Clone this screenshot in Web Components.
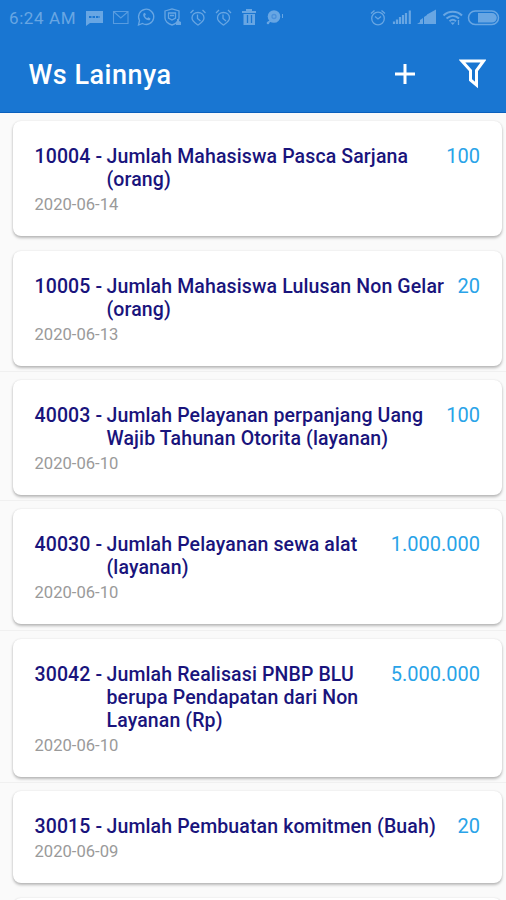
<!DOCTYPE html>
<html lang="id">
<head>
<meta charset="utf-8">
<title>Ws Lainnya</title>
<style>
html,body{margin:0;height:100%;overflow:hidden;background:#fafafa;font-family:Roboto,"Liberation Sans",sans-serif}
</style>
</head>
<body>
<ws-screen>
  <status-bar slot="head" time="6:24 AM"></status-bar>
  <app-bar slot="head">Ws Lainnya</app-bar>
  <ws-card plain code="10004" date="2020-06-14" value="100">Jumlah Mahasiswa Pasca Sarjana<br>(orang)</ws-card>
  <ws-card code="10005" date="2020-06-13" value="20">Jumlah Mahasiswa Lulusan Non Gelar<br>(orang)</ws-card>
  <ws-card code="40003" date="2020-06-10" value="100">Jumlah Pelayanan perpanjang Uang<br>Wajib Tahunan Otorita (layanan)</ws-card>
  <ws-card code="40030" date="2020-06-10" value="1.000.000">Jumlah Pelayanan sewa alat<br>(layanan)</ws-card>
  <ws-card code="30042" date="2020-06-10" value="5.000.000">Jumlah Realisasi PNBP BLU<br>berupa Pendapatan dari Non<br>Layanan (Rp)</ws-card>
  <ws-card plain code="30015" date="2020-06-09" value="20">Jumlah Pembuatan komitmen (Buah)</ws-card>
  <ws-card></ws-card>
</ws-screen>
<script>
const define = (name, html, setup) => customElements.define(name, class extends HTMLElement {
  constructor() {
    super();
    this.attachShadow({mode: 'open'}).innerHTML = html;
  }
  connectedCallback() { if (setup) setup(this, this.shadowRoot); }
});

define('ws-screen', `<style>
:host{display:flex;flex-direction:column;height:900px;overflow:hidden}
header{flex:none;background:#1976d2;height:112px;border-bottom:1px solid #0a60bd}
main{flex:1;overflow:hidden;padding-top:.3px}
</style><header><slot name="head"></slot></header><main><slot></slot></main>`);

define('status-bar', `<style>
:host{display:flex;height:36px;color:#68a6e3;font-size:17px}
span{box-sizing:border-box;width:86px;padding-left:9px;line-height:37px;white-space:nowrap;letter-spacing:.6px}
svg{display:block;flex:none}
</style><span></span>
<svg width="420" height="36" viewBox="86 0 420 36" fill="none" stroke="currentColor" stroke-width="1.3">
<path d="M86 11h17v12H90l-4 3z" fill="currentColor" stroke="none"/><path d="M89 17h11" stroke="#1976d2" stroke-width="2" stroke-dasharray="2.5 1"/>
<path d="M113.500 11.500h14.500v12h-14.500zM114 12l6.800 6 6.800-6" stroke-width="1.100" opacity=".8"/>
<path d="M138.500 25l1-4.500a7.600 7.600 0 1 1 3 3z"/><path d="M143.500 13.500c-1.500 3 3 8 6.500 6.500l.5-1.500-2.200-1.200-1.100 1c-1.200-.5-2-1.500-2.300-2.500l1-1-1-2z" fill="currentColor" stroke="none"/>
<path d="M165 11l7-2 7 2v7c0 3-3 6-7 7-4-1-7-4-7-7z"/><path d="M168.500 13h7v5l-3.500 2-3.500-2zM170 15.500h4"/><path d="M176 25v-3l1-1v-2h2v2l2 1v3z" fill="currentColor" stroke="none"/>
<path d="M198 12.500c3.500 0 6 2.300 6 5.500s-3 5-6 7c-3-2-6-3.800-6-7s2.500-5.500 6-5.500zM190.500 13l3-3M202.500 10l3 3M197.500 14.500v4l3 2.500"/>
<path transform="translate(25.500 0)" d="M198 12.500c3.500 0 6 2.300 6 5.500s-3 5-6 7c-3-2-6-3.800-6-7s2.500-5.500 6-5.500zM190.500 13l3-3M202.500 10l3 3M197.500 14.500v4l3 2.500"/>
<path d="M242 11h4v-2h6v2h4v2h-14zM243.500 14h11.500v11h-11.500z" fill="currentColor" stroke="none"/><path d="M247.500 15v8M251.500 15v8" stroke="#1976d2"/>
<circle cx="274" cy="16.500" r="6.300" fill="currentColor" stroke="none"/><path d="M272 20l-4 2.500" stroke-width="2"/><circle cx="268" cy="23" r="1.300" fill="currentColor" stroke="none"/><path d="M282.500 14v4" stroke-width="1"/><circle cx="274" cy="16.500" r="2" stroke="#4a90db"/>
<circle cx="378" cy="18.500" r="6.300"/><path d="M371 13.500l3.500-3M381.500 10.500l3.500 3M375 16.500l3 2.500 3-2.500"/>
<path d="M394 24v-2.500M397 24v-4.500M400 24v-7M403 24v-9M406 24V13M409.800 24V10.500" stroke-width="2.200"/>
<path d="M417 24l4-2.500V24zM420 24v-4l3-2v6zM424 24v-7l3-2v9zM427 24v-9.500l9-5V24z" fill="currentColor" stroke="none"/>
<path d="M443.500 15.500c5-5 13.500-5 18.500 0M446.500 18.500c4-3.500 9-3.500 12.500 0M449.500 21.200c2-1.800 4.500-1.800 6.500 0" stroke-width="2"/><path d="M450.500 22.500h4.500l-2.300 2.500z" fill="currentColor" stroke="none"/><path d="M458.500 20v5"/>
<rect x="468.500" y="11" width="30" height="13.500" rx="6.700" stroke-width="1.500"/><path d="M478 13h14a4.800 4.800 0 0 1 0 9.600H478z" fill="currentColor" stroke="none"/>
</svg>`, (el, r) => { r.querySelector('span').textContent = el.getAttribute('time'); });

define('app-bar', `<style>
:host{display:flex;align-items:center;height:76px;padding:0 20px 0 28.500px;color:#fff;font-size:27px;font-weight:500}
h1{font:inherit;margin:0;padding-top:2px;flex:1;letter-spacing:.5px;line-height:32px}
svg{display:block}
.p{margin-right:44px}
</style><h1><slot></slot></h1>
<svg class="p" width="20" height="20" viewBox="0 0 20 20" fill="none" stroke="#fff" stroke-width="3"><path d="M10 0v20M0 10h20"/></svg>
<svg width="27" height="30" viewBox="0 0 27 30" fill="none" stroke="#fff" stroke-width="3"><path d="M3 2h21.500l-7 9.500V26l-6-5v-9.500z"/></svg>`);

define('ws-card', `<style>
:host{display:block;padding:8px 4.500px 5.400px 12.500px;border-bottom:1px solid #f0f0f0}
:host([plain]){border-bottom-color:transparent}
article{box-sizing:border-box;min-height:92px;background:#fff;border-radius:8px;padding:24px 21.500px 22px 22px;box-shadow:0 2px 3px rgba(0,0,0,.26),0 0 2px rgba(0,0,0,.1)}
.row{display:flex;line-height:23px;font-size:19.500px;color:#19147c;font-weight:500;white-space:nowrap;letter-spacing:.12px}
.code{width:72px;flex:none}
.name{flex:1}
.value{font-size:20px;font-weight:400;letter-spacing:0;color:#29a3e8}
time{display:block;height:23px;line-height:27px;font-size:16.600px;color:#9a9a9a}
</style><article><div class="row"><div class="code"></div><div class="name"><slot></slot></div><div class="value"></div></div><time></time></article>`, (el, r) => {
  const code = el.getAttribute('code');
  if (!code) return;
  r.querySelector('.code').textContent = code + ' -';
  r.querySelector('.value').textContent = el.getAttribute('value');
  r.querySelector('time').textContent = el.getAttribute('date');
});
</script>
</body>
</html>
